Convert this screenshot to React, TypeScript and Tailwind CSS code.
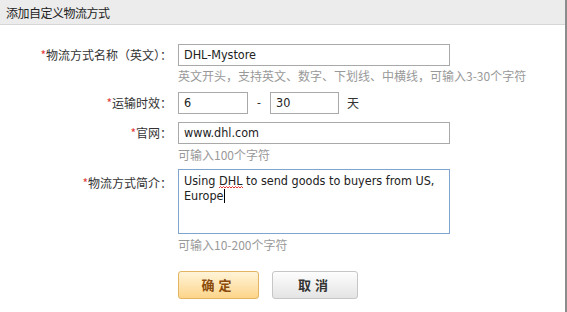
import React from "react";

const cjk = "font-['Microsoft_YaHei','Noto_Sans_CJK_SC',sans-serif]";
const latin = "font-['Tahoma','DejaVu_Sans_Condensed','Noto_Sans_CJK_SC',sans-serif]";

function Label({ children }: { children: React.ReactNode }) {
  return (
    <div className={`w-[172px] shrink-0 text-right text-[12px] text-[#333] ${cjk}`}>
      <span className="text-[#e4393c]">*</span>
      {children}
    </div>
  );
}

function Hint({ children }: { children: React.ReactNode }) {
  return (
    <div className={`ml-[178px] text-[12px] leading-[14px] text-[#999] ${cjk}`}>{children}</div>
  );
}

function TextBox({ value, width }: { value: string; width: string }) {
  return (
    <div
      className={`${width} h-[22px] shrink-0 border border-[#a9a9a9] bg-white pl-[5px] text-[12.5px] leading-[20px] text-[#222] ${latin}`}
    >
      {value}
    </div>
  );
}

export default function App() {
  return (
    <div className="w-[567px] h-[312px] bg-white border-r-2 border-[#8c8c8c] overflow-hidden">
      {/* Title bar */}
      <div className={`h-[25px] bg-[#ececec] border-b border-[#d6d6d6] pl-[6px] pt-[5px] text-[12px] leading-[16px] tracking-[-0.5px] text-[#222] ${cjk}`}>
        添加自定义物流方式
      </div>

      <div className="flex flex-col">
        {/* name */}
        <div className="mt-[19px] flex items-center gap-[6px]">
          <Label>物流方式名称（英文）：</Label>
          <TextBox value="DHL-Mystore" width="w-[272px]" />
        </div>
        <div className="mt-[3px]">
          <Hint>英文开头，支持英文、数字、下划线、中横线，可输入3-30个字符</Hint>
        </div>

        {/* delivery time */}
        <div className="mt-[9px] flex items-center gap-[6px]">
          <Label>运输时效：</Label>
          <TextBox value="6" width="w-[70px]" />
          <span className={`w-[10px] text-center text-[12px] text-[#333] ${latin}`}>-</span>
          <TextBox value="30" width="w-[69px]" />
          <span className={`ml-[2px] text-[12px] text-[#333] ${cjk}`}>天</span>
        </div>

        {/* website */}
        <div className="mt-[8px] flex items-center gap-[6px]">
          <Label>官网：</Label>
          <TextBox value="www.dhl.com" width="w-[272px]" />
        </div>
        <div className="mt-[4px]">
          <Hint>可输入100个字符</Hint>
        </div>

        {/* description */}
        <div className="mt-[7px] flex items-start gap-[6px]">
          <div className="pt-[5px]">
            <Label>物流方式简介：</Label>
          </div>
          <div
            className={`w-[272px] h-[65px] shrink-0 border border-[#7fa4d0] bg-white pl-[5px] pt-[3px] text-[12.5px] leading-[15px] text-[#222] ${latin}`}
          >
            <div>
              Using{" "}
              <span className="relative inline-block">
                DHL
                <svg className="absolute left-0 -bottom-[1px]" width="25" height="3" viewBox="0 0 25 3">
                  <path d="M0 2 L1.5 0.5 L3 2 L4.5 0.5 L6 2 L7.5 0.5 L9 2 L10.5 0.5 L12 2 L13.5 0.5 L15 2 L16.5 0.5 L18 2 L19.5 0.5 L21 2 L22.5 0.5 L24 2" fill="none" stroke="#e02020" strokeWidth="0.9" />
                </svg>
              </span>{" "}
              to send goods to buyers from US,
            </div>
            <div className="flex items-center">
              Europe
              <span className="inline-block w-px h-[14px] bg-black" />
            </div>
          </div>
        </div>
        <div className="mt-[4px]">
          <Hint>可输入10-200个字符</Hint>
        </div>

        {/* actions */}
        <div className="mt-[19px] ml-[178px] flex gap-[13px]">
          <button
            className={`w-[81px] h-[28px] rounded-[3px] border border-[#e3b462] bg-gradient-to-b from-[#fff4d8] to-[#fdd58a] text-[13px] font-bold tracking-[4px] text-[#8a4b0c] ${cjk}`}
          >
            确定
          </button>
          <button
            className={`w-[86px] h-[28px] rounded-[3px] border border-[#c6c6c6] bg-gradient-to-b from-[#fdfdfd] to-[#e4e4e4] text-[13px] font-bold tracking-[4px] text-[#333] ${cjk}`}
          >
            取消
          </button>
        </div>
      </div>
    </div>
  );
}
